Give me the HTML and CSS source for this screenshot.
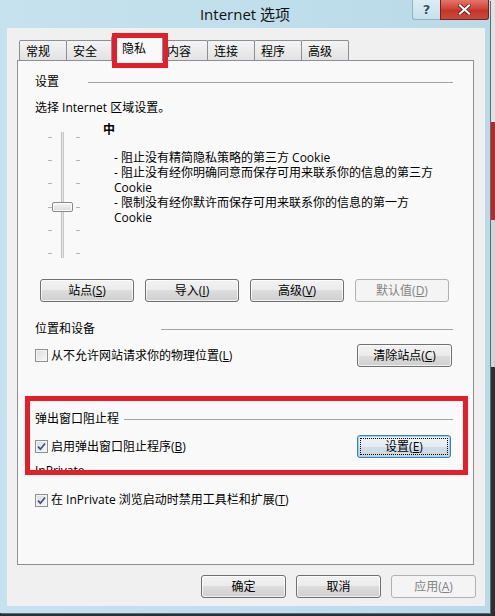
FILE: index.html
```html
<!DOCTYPE html>
<html lang="zh-CN">
<head>
<meta charset="utf-8">
<title>Internet 选项</title>
<link rel="stylesheet" href="styles.css">
</head>
<body>
<div class="window">
  <div class="titlebar">
    <div></div>
    <div class="title">Internet 选项</div>
    <div class="caption-buttons">
      <div class="cap-btn help">?</div>
      <div class="cap-btn close">
        <svg width="13" height="11" viewBox="0 0 13 11"><path d="M2 1.5 L11 9.5 M11 1.5 L2 9.5" stroke="#5a1410" stroke-width="3.6" stroke-linecap="square"/><path d="M2 1.5 L11 9.5 M11 1.5 L2 9.5" stroke="#ffffff" stroke-width="2.2" stroke-linecap="square"/></svg>
      </div>
    </div>
  </div>
  <div class="dialog">
    <div class="tabs">
      <div class="tab">常规</div>
      <div class="tab">安全</div>
      <div class="tab active">隐私<span class="mark mark-tab"></span></div>
      <div class="tab">内容</div>
      <div class="tab">连接</div>
      <div class="tab">程序</div>
      <div class="tab">高级</div>
    </div>
    <div class="panel">
      <div class="group-head"><span>设置</span><span class="rule rule-settings"></span></div>
      <div class="zone-label">选择 Internet 区域设置。</div>
      <div class="privacy">
        <div class="slider">
          <div class="ticks">
            <div class="tick-row"><span class="tick"></span><span class="tick"></span></div>
            <div class="tick-row"><span class="tick"></span><span class="tick"></span></div>
            <div class="tick-row"><span class="tick"></span><span class="tick"></span></div>
            <div class="tick-row"><span class="tick"></span><span class="tick"></span></div>
            <div class="tick-row"><span class="tick"></span><span class="tick"></span></div>
            <div class="tick-row"><span class="tick"></span><span class="tick"></span></div>
          </div>
          <div class="thumb"></div>
        </div>
        <div class="level">
          <div class="level-name">中</div>
          <div class="level-desc">- 阻止没有精简隐私策略的第三方 Cookie<br>- 阻止没有经你明确同意而保存可用来联系你的信息的第三方<br>Cookie<br>- 限制没有经你默许而保存可用来联系你的信息的第一方<br>Cookie</div>
        </div>
      </div>
      <div class="btn-row">
        <button class="btn">站点(<u>S</u>)</button>
        <button class="btn">导入(<u>I</u>)</button>
        <button class="btn">高级(<u>V</u>)</button>
        <button class="btn disabled">默认值(<u>D</u>)</button>
      </div>

      <div class="group-head head-location"><span>位置和设备</span><span class="rule rule-location"></span></div>
      <div class="check-row row-location">
        <label class="check"><span class="cb"></span><span>从不允许网站请求你的物理位置(<u>L</u>)</span></label>
        <button class="btn btn-clear">清除站点(<u>C</u>)</button>
      </div>

      <div class="group-head head-popup"><span>弹出窗口阻止程</span><span class="rule rule-popup"></span></div>
      <div class="check-row row-popup">
        <label class="check"><span class="cb checked"><svg width="9" height="9" viewBox="0 0 9 9"><path d="M1 4.6 L3.4 7.2 L8 1.5" fill="none" stroke="#3d5383" stroke-width="1.7"/></svg></span><span>启用弹出窗口阻止程序(<u>B</u>)</span></label>
        <button class="btn btn-default">设置(<u>E</u>)</button>
      </div>

      <div class="group-head head-inprivate"><span>InPrivate</span></div>
      <div class="check-row row-inprivate">
        <label class="check"><span class="cb checked"><svg width="9" height="9" viewBox="0 0 9 9"><path d="M1 4.6 L3.4 7.2 L8 1.5" fill="none" stroke="#3d5383" stroke-width="1.7"/></svg></span><span>在 InPrivate 浏览启动时禁用工具栏和扩展(<u>T</u>)</span></label>
      </div>

      <span class="mark mark-popup"></span>
    </div>
    <div class="footer">
      <button class="btn btn-foot">确定</button>
      <button class="btn btn-foot">取消</button>
      <button class="btn btn-foot disabled">应用(<u>A</u>)</button>
    </div>
  </div>
</div>
</body>
</html>
```

FILE: styles.css
```css
* { box-sizing: border-box; }
html, body { margin: 0; padding: 0; }
body {
  width: 495px;
  height: 616px;
  overflow: hidden;
  background: linear-gradient(to bottom, #e2e2e2 0, #e2e2e2 122px, #b8262a 122px, #b8262a 220px, #d4d4d4 220px, #d4d4d4 367px, #2e2e2e 367px);
  font-family: "Open Sans", "Noto Sans CJK SC", sans-serif;
  font-size: 12px;
  color: #000;
}
.window {
  width: 490px;
  height: 613px;
  background: linear-gradient(to right, #c6e2ee, #badaE8);
  display: flex;
  flex-direction: column;
  box-shadow: 1px 1px 0 #55707c;
}
.titlebar {
  height: 28px;
  display: grid;
  grid-template-columns: 1fr auto 1fr;
}
.title {
  font-size: 15px;
  line-height: 28px;
  color: #111;
  white-space: nowrap;
}
.caption-buttons {
  display: flex;
  justify-content: flex-end;
  align-items: flex-start;
  padding-right: 1px;
}
.cap-btn {
  height: 20px;
  display: flex;
  align-items: center;
  justify-content: center;
}
.help {
  width: 28px;
  border: 1px solid #8fb3c4;
  border-top: none;
  border-right: none;
  border-radius: 0 0 0 3px;
  background: linear-gradient(#dcedf5, #c5e0ec);
  color: #35505f;
  font-family: "DejaVu Sans", sans-serif;
  font-weight: bold;
  font-size: 13px;
  text-shadow: 0 0 2px #fff;
}
.close {
  width: 49px;
  border: 1px solid #7a2019;
  border-top: none;
  border-radius: 0 0 3px 0;
  background: linear-gradient(#e5746a, #cf4538 45%, #c2362a 55%, #c94a3c);
}
.dialog {
  flex: 1;
  margin: 0 5px 7px 7px;
  background: #f0f0f0;
  padding: 8px 11px 8px 10px;
  display: flex;
  flex-direction: column;
}
.tabs {
  display: flex;
  align-items: flex-end;
  height: 25px;
  margin: 0 0 -1px 2px;
  position: relative;
  z-index: 1;
}
.tab {
  width: 48px;
  height: 20px;
  margin: 0 -1px 1px 0;
  border: 1px solid #8c8e94;
  border-bottom: none;
  border-radius: 2px 2px 0 0;
  background: linear-gradient(#f4f4f4, #e2e2e2);
  padding: 2px 0 0 6px;
  line-height: 17px;
  white-space: nowrap;
}
.tab.active {
  width: 52px;
  height: 25px;
  margin: 0 -3px 0 -2px;
  background: #f9f9f9;
  padding: 3px 0 0 10px;
  position: relative;
  z-index: 2;
}
.mark {
  position: absolute;
  border: 5px solid #e3202a;
  z-index: 5;
}
.mark-tab {
  left: 0px;
  top: -4px;
  width: 56px;
  height: 35px;
}
.panel {
  height: 505px;
  border: 1px solid #8e8f94;
  background: #f9f9f9;
  padding: 13px 20px 0 17px;
  position: relative;
}
.group-head {
  display: flex;
  align-items: center;
  height: 16px;
  line-height: 16px;
  white-space: nowrap;
}
.rule {
  height: 1px;
  background: #a3a3a3;
  margin-left: auto;
}
.rule-settings { width: 365px; }
.rule-location { width: 292px; }
.rule-popup { width: 329px; }
.zone-label {
  margin-top: 10px;
  line-height: 15px;
}
.privacy {
  display: flex;
  margin-top: 7px;
}
.slider {
  width: 32px;
  height: 126px;
  margin: 10px 0 0 13px;
  position: relative;
  background: linear-gradient(to right, #c0c0c0 0, #c0c0c0 1px, #e6e6e6 1px, #e6e6e6 2px, #c8c8c8 2px) no-repeat 13px 0 / 3px 100%;
  flex-shrink: 0;
}
.ticks {
  height: 100%;
  padding: 5px 0 4px;
  display: flex;
  flex-direction: column;
  justify-content: space-between;
}
.tick-row {
  display: flex;
  justify-content: space-between;
  height: 1px;
}
.tick {
  width: 4px;
  height: 1px;
  background: #b4b4b4;
}
.thumb {
  position: absolute;
  left: 4px;
  top: 70px;
  width: 21px;
  height: 10px;
  border: 1px solid #888;
  border-radius: 2px;
  background: linear-gradient(#f6f6f6, #dadada);
  box-shadow: inset 0 0 0 1px #fdfdfd;
}
.level {
  margin-left: 23px;
}
.level-name {
  line-height: 15px;
  font-weight: bold;
}
.level-desc {
  margin-top: 13px;
  padding-left: 11px;
  line-height: 15px;
  white-space: nowrap;
}
.btn-row {
  display: flex;
  gap: 11px;
  margin: 21px 0 0 5px;
}
.btn {
  width: 94px;
  height: 23px;
  padding: 0;
  border: 1px solid #707070;
  border-radius: 3px;
  background: linear-gradient(#f2f2f2, #ebebeb 50%, #dddddd 50%, #cfcfcf);
  box-shadow: inset 0 0 0 1px rgba(255,255,255,0.7);
  font-family: inherit;
  font-size: 12px;
  color: #000;
  display: flex;
  align-items: center;
  justify-content: center;
  line-height: 1;
  white-space: nowrap;
}
.btn.disabled {
  border-color: #adb2b5;
  background: #f4f4f4;
  box-shadow: none;
  color: #838383;
}
.btn-default {
  border-color: #3c7fb1;
  background: linear-gradient(#eef4f8, #e3ecf2 50%, #d3dfe7 50%, #c9d6df);
  box-shadow: inset 0 0 0 1px #9fd3ea;
  outline: 1px dotted #000;
  outline-offset: -4px;
  margin-right: 2px;
}
.btn-clear {
  width: 95px;
  margin-right: 1px;
}
.head-location { margin-top: 19px; }
.head-popup { margin-top: 44px; }
.head-inprivate { margin-top: 5px; }
.check-row {
  display: flex;
  align-items: center;
  justify-content: space-between;
}
.row-location { margin-top: 7px; }
.row-popup { margin-top: 8px; }
.row-inprivate { margin-top: 13px; height: 16px; }
.check {
  display: flex;
  align-items: center;
  gap: 3px;
  line-height: 16px;
  white-space: nowrap;
}
.cb {
  width: 13px;
  height: 13px;
  border: 1px solid #8e8f8f;
  background: linear-gradient(135deg, #dcdcdc, #f8f8f8);
  box-shadow: inset 0 0 0 1px #f4f4f4;
  display: flex;
  align-items: center;
  justify-content: center;
  flex-shrink: 0;
}
.mark-popup {
  left: 7px;
  top: 335px;
  width: 443px;
  height: 79px;
}
.footer {
  display: flex;
  justify-content: flex-end;
  gap: 10px;
  margin: 10px -2px 0 0;
}
.btn-foot {
  width: 85px;
}
```
